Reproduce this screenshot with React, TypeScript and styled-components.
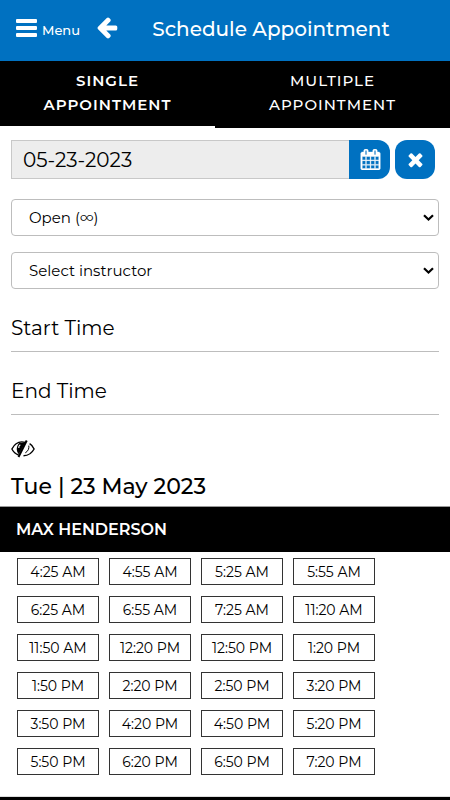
import React, { useState } from "react";
import styled, { createGlobalStyle, css } from "styled-components";

const BLUE = "#0071c1";

const GlobalStyle = createGlobalStyle`
  *, *::before, *::after { box-sizing: border-box; }
  body {
    margin: 0;
    background: #fff;
    color: #000;
    font-family: Montserrat, Inter, "Noto Sans", sans-serif;
  }
  button, input, select { font: inherit; color: inherit; margin: 0; }
`;

const Header = styled.header`
  display: flex;
  align-items: center;
  height: 61px;
  padding: 0 16px 6px;
  background: ${BLUE};
  color: #fff;
`;

const HeaderButton = styled.button`
  display: flex;
  align-items: center;
  gap: 5px;
  padding: 0;
  border: 0;
  background: none;
  font-size: 13px;
  font-weight: 500;
  line-height: 20px;
  cursor: pointer;

  & + & { margin-left: 15px; }
`;

const BarsLabel = styled.span`
  padding-top: 4px;
`;

const Title = styled.h1`
  flex: 1;
  margin: 0;
  padding: 2px 20px 0 9px;
  text-align: center;
  font-size: 20px;
  font-weight: 500;
  line-height: 28px;
`;

const Tabs = styled.div`
  display: grid;
  grid-template-columns: 43fr 47fr;
  background: #000;
`;

const Tab = styled.button<{ $active: boolean }>`
  padding: 8px 24px 9px;
  border: 0;
  border-bottom: 2px solid ${(p) => (p.$active ? "#fff" : "#000")};
  background: #000;
  color: #fff;
  font-size: 15px;
  font-weight: ${(p) => (p.$active ? 600 : 500)};
  line-height: 24px;
  letter-spacing: 1px;
  text-transform: uppercase;
  cursor: pointer;
`;

const Form = styled.form`
  display: flex;
  flex-direction: column;
  padding: 12px 11px 0;
`;

const DateRow = styled.div`
  display: flex;
  height: 39px;
  margin-bottom: 20px;
  padding-right: 4px;
`;

const DateInput = styled.input`
  flex: 1;
  min-width: 0;
  padding: 0 11px;
  border: 1px solid #c8c8c8;
  border-right: 0;
  border-radius: 0;
  background: #ededed;
  font-size: 20px;
  outline: none;
`;

const IconButton = styled.button<{ $attached?: boolean }>`
  display: flex;
  align-items: center;
  justify-content: center;
  width: 40px;
  padding: 0;
  border: 0;
  border-radius: 12px;
  background: ${BLUE};
  color: #fff;
  cursor: pointer;

  ${(p) =>
    p.$attached &&
    css`
      width: 41px;
      margin-right: 5px;
      padding-left: 2px;
      border-radius: 0 12px 12px 0;
    `}
`;

const SelectField = styled.div`
  position: relative;
  margin-bottom: 16px;

  svg {
    position: absolute;
    top: 15px;
    right: 5px;
    pointer-events: none;
  }
`;

const Select = styled.select`
  display: block;
  width: 100%;
  height: 37px;
  padding: 0 32px 0 17px;
  border: 1px solid #bdbdbd;
  border-radius: 4px;
  background: #fff;
  font-size: 15px;
  appearance: none;
`;

const TimeInput = styled.input`
  width: 100%;
  height: 47px;
  margin-bottom: 16px;
  padding: 0;
  border: 0;
  border-bottom: 1px solid #bdbdbd;
  border-radius: 0;
  background: none;
  font-size: 20px;
  outline: none;

  &::placeholder { color: #000; opacity: 1; }
`;

const VisibilityButton = styled.button`
  display: flex;
  align-self: flex-start;
  margin-top: 9px;
  padding: 0;
  border: 0;
  background: none;
  cursor: pointer;
`;

const DayHeading = styled.h2`
  margin: 0;
  padding: 15px 11px 5px;
  font-size: 22px;
  font-weight: 500;
  line-height: 28px;
`;

const InstructorHeading = styled.h3`
  margin: 0;
  padding: 11px 16px 10px;
  border-top: 1px solid #999;
  background: #000;
  color: #fff;
  font-size: 16px;
  font-weight: 600;
  line-height: 24px;
  text-transform: uppercase;
`;

const Slots = styled.div`
  display: grid;
  grid-template-columns: repeat(auto-fill, 82px);
  gap: 11px 10px;
  padding: 6px 16px 21px 17px;
`;

const Slot = styled.button`
  height: 27px;
  padding: 0;
  border: 1px solid #333;
  border-radius: 0;
  background: #fff;
  font-size: 14px;
  line-height: 24px;
  white-space: nowrap;
  cursor: pointer;
`;

const Footer = styled.footer`
  height: 4px;
  border-top: 1px solid #ddd;
  background: #000;
`;

const BarsIcon = () => (
  <svg width="21" height="18" viewBox="0 0 21 18" fill="currentColor" aria-hidden="true">
    <rect width="21" height="4" rx="1" />
    <rect y="7" width="21" height="4" rx="1" />
    <rect y="14" width="21" height="4" rx="1" />
  </svg>
);

const ArrowLeftIcon = () => (
  <svg width="24" height="24" viewBox="0 64 1792 1792" fill="currentColor" aria-hidden="true">
    <path d="M1664 896v128q0 53-32.5 90.5t-84.5 37.5h-704l293 294q38 36 38 90t-38 90l-75 76q-37 37-90 37-52 0-91-37l-651-652q-37-37-37-90 0-52 37-91l651-650q38-38 91-38 52 0 90 38l75 74q38 38 38 91t-38 91l-293 293h704q52 0 84.500 37.500t32.500 90.500z" />
  </svg>
);

const CalendarIcon = () => (
  <svg width="21" height="21" viewBox="0 0 1792 1792" fill="currentColor" stroke="currentColor" strokeWidth="32" aria-hidden="true">
    <path d="M192 1664h288v-288h-288v288zm352 0h320v-288h-320v288zm-352-352h288v-320h-288v320zm352 0h320v-320h-320v320zm-352-384h288v-288h-288v288zm736 736h320v-288h-320v288zm-384-736h320v-288h-320v288zm768 736h288v-288h-288v288zm-384-352h320v-320h-320v320zm-352-864v-288q0-13-9.5-22.5t-22.5-9.5h-64q-13 0-22.5 9.5t-9.5 22.5v288q0 13 9.5 22.5t22.5 9.5h64q13 0 22.5-9.5t9.5-22.5zm736 864h288v-320h-288v320zm-384-384h320v-288h-320v288zm384 0h288v-288h-288v288zm32-480v-288q0-13-9.5-22.5t-22.5-9.5h-64q-13 0-22.5 9.5t-9.5 22.5v288q0 13 9.5 22.5t22.5 9.5h64q13 0 22.5-9.5t9.5-22.5zm384-64v1280q0 52-38 90t-90 38h-1408q-52 0-90-38t-38-90v-1280q0-52 38-90t90-38h128v-96q0-66 47-113t113-47h64q66 0 113 47t47 113v96h384v-96q0-66 47-113t113-47h64q66 0 113 47t47 113v96h128q52 0 90 38t38 90z" />
  </svg>
);

const TimesIcon = () => (
  <svg width="21" height="21" viewBox="0 0 1792 1792" fill="currentColor" aria-hidden="true">
    <path d="M1490 1322q0 40-28 68l-136 136q-28 28-68 28t-68-28l-294-294-294 294q-28 28-68 28t-68-28l-136-136q-28-28-28-68t28-68l294-294-294-294q-28-28-28-68t28-68l136-136q28-28 68-28t68 28l294 294 294-294q28-28 68-28t68 28l136 136q28 28 28 68t-28 68l-294 294 294 294q28 28 28 68z" />
  </svg>
);

const ChevronIcon = () => (
  <svg width="11" height="8" viewBox="0 0 11 8" fill="none" stroke="#000" strokeWidth="2.2" aria-hidden="true">
    <path d="M1 1.300 5.500 5.600 10 1.300" />
  </svg>
);

const EyeOffIcon = () => (
  <svg width="24" height="18" viewBox="0 0 24 18" fill="none" stroke="#000" aria-hidden="true">
    <path d="M14.500 2.400C8 .6 3.400 4 .9 9c1.500 3 3.700 5 6.600 6" strokeWidth="1.400" />
    <path d="M14.500 2.300 7.800 14.200C5 11.500 5 6 8.300 3z" fill="#000" stroke="none" />
    <path d="M9.300 4.800C8 5.600 7.600 6.800 7.800 8" stroke="#fff" strokeWidth="1.200" />
    <path d="M15.700.5 7.500 17" strokeWidth="2" />
    <path d="M18.600 3.700C20.800 5 22.300 7 23.100 9c-2 3.800-5.400 6.600-10.600 6.800" strokeWidth="1.400" />
    <path d="M17.800 5.600c.5 3-.8 5.700-3.500 7.200" strokeWidth="1" />
  </svg>
);

const tabNames = ["Single Appointment", "Multiple Appointment"];

const slotTimes = [
  "4:25 AM", "4:55 AM", "5:25 AM", "5:55 AM",
  "6:25 AM", "6:55 AM", "7:25 AM", "11:20 AM",
  "11:50 AM", "12:20 PM", "12:50 PM", "1:20 PM",
  "1:50 PM", "2:20 PM", "2:50 PM", "3:20 PM",
  "3:50 PM", "4:20 PM", "4:50 PM", "5:20 PM",
  "5:50 PM", "6:20 PM", "6:50 PM", "7:20 PM",
];

export default function App() {
  const [activeTab, setActiveTab] = useState(0);
  const [date, setDate] = useState("05-23-2023");

  return (
    <>
      <GlobalStyle />
      <Header>
        <HeaderButton type="button">
          <BarsIcon />
          <BarsLabel>Menu</BarsLabel>
        </HeaderButton>
        <HeaderButton type="button" aria-label="Back">
          <ArrowLeftIcon />
        </HeaderButton>
        <Title>Schedule Appointment</Title>
      </Header>
      <Tabs role="tablist">
        {tabNames.map((name, i) => (
          <Tab
            key={name}
            type="button"
            role="tab"
            aria-selected={i === activeTab}
            $active={i === activeTab}
            onClick={() => setActiveTab(i)}
          >
            {name}
          </Tab>
        ))}
      </Tabs>
      <main>
        <Form>
          <DateRow>
            <DateInput
              aria-label="Date"
              value={date}
              onChange={(e) => setDate(e.target.value)}
            />
            <IconButton type="button" $attached aria-label="Choose date">
              <CalendarIcon />
            </IconButton>
            <IconButton type="button" aria-label="Clear date" onClick={() => setDate("")}>
              <TimesIcon />
            </IconButton>
          </DateRow>
          <SelectField>
            <Select aria-label="Availability">
              <option>Open (∞)</option>
            </Select>
            <ChevronIcon />
          </SelectField>
          <SelectField>
            <Select aria-label="Instructor">
              <option>Select instructor</option>
            </Select>
            <ChevronIcon />
          </SelectField>
          <TimeInput aria-label="Start Time" placeholder="Start Time" />
          <TimeInput aria-label="End Time" placeholder="End Time" />
          <VisibilityButton type="button" aria-label="Toggle unavailable times">
            <EyeOffIcon />
          </VisibilityButton>
        </Form>
        <DayHeading>Tue | 23 May 2023</DayHeading>
        <InstructorHeading>Max Henderson</InstructorHeading>
        <Slots>
          {slotTimes.map((time) => (
            <Slot key={time} type="button">
              {time}
            </Slot>
          ))}
        </Slots>
      </main>
      <Footer />
    </>
  );
}
